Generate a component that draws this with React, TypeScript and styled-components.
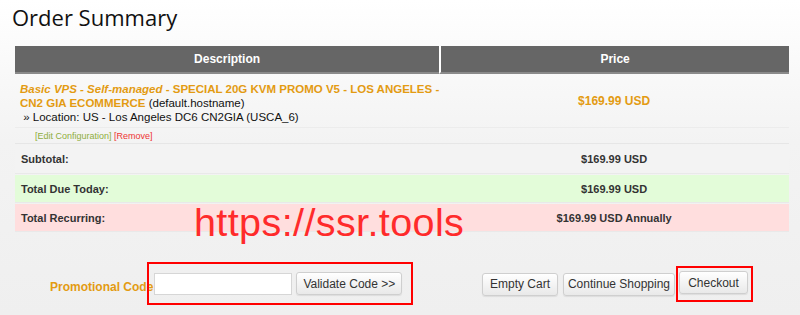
import React from "react";
import styled, { createGlobalStyle } from "styled-components";

const GlobalStyle = createGlobalStyle`
  html, body {
    margin: 0;
    padding: 0;
  }
  body {
    width: 800px;
    height: 315px;
    overflow: hidden;
    background: linear-gradient(#ffffff 0%, #f3f3f3 45%, #efefef 100%);
    font-family: "Liberation Sans", Arial, sans-serif;
  }
`;

const Page = styled.div`
  position: relative;
  width: 800px;
  height: 315px;
  box-sizing: border-box;
  padding: 0 11px 0 15px;
`;

const Title = styled.h1`
  margin: 0 0 0 -3px;
  padding-top: 3px;
  height: 46px;
  box-sizing: border-box;
  font-family: "Open Sans", sans-serif;
  font-weight: 400;
  font-size: 22px;
  line-height: 28px;
  color: #111;
`;

const Table = styled.table`
  width: 774px;
  border-collapse: separate;
  border-spacing: 0 1px;
  margin-top: -1px;
  font-size: 11px;
  color: #333;
`;

const Head = styled.th<{ $w: number }>`
  width: ${(p) => p.$w}px;
  height: 26px;
  padding: 0;
  background: #666;
  border-bottom: 2px solid #8a8a8a;
  border-left: ${(p) => (p.$w < 400 ? "2px solid #fff" : "none")};
  color: #fff;
  font-size: 12px;
  font-weight: bold;
  text-align: center;
`;

const Cell = styled.td<{ $bg?: string; $center?: boolean; $h?: number }>`
  height: ${(p) => p.$h ?? 28}px;
  padding: 0 6px;
  box-sizing: border-box;
  background: ${(p) => p.$bg ?? "transparent"};
  text-align: ${(p) => (p.$center ? "center" : "left")};
  font-weight: bold;
  vertical-align: middle;
  border-bottom: 1px solid #e9e9e9;
`;

const ItemCell = styled.td`
  padding: 7px 0 3px 5px;
  vertical-align: top;
  font-size: 11.5px;
  line-height: 14px;
  white-space: nowrap;
  color: #111;
  border-bottom: 1px solid #ececec;
`;

const PriceCell = styled.td`
  text-align: center;
  vertical-align: middle;
  font-size: 12px;
  font-weight: bold;
  color: #e39b12;
  border-bottom: 1px solid #ececec;
`;

const Product = styled.span`
  color: #e39b12;
  font-weight: bold;
`;

const Group = styled.em`
  font-style: italic;
`;

const Links = styled.td`
  height: 14px;
  padding: 0 0 0 20px;
  font-size: 9px;
  line-height: 14px;
  border-bottom: 1px solid #e6e6e6;
`;

const LinkText = styled.a<{ $c: string }>`
  color: ${(p) => p.$c};
  text-decoration: none;
`;

const Footer = styled.div`
  display: flex;
  align-items: center;
  justify-content: space-between;
  margin-top: 29px;
  width: 738px;
`;

const Promo = styled.div`
  display: flex;
  align-items: center;
  padding-left: 35px;
`;

const PromoLabel = styled.span`
  color: #e39b12;
  font-weight: bold;
  font-size: 12px;
  margin-top: 6px;
`;

const Mark = styled.div<{ $pad: string; $ml?: number }>`
  display: flex;
  align-items: center;
  gap: 4px;
  border: 2px solid #ff0000;
  padding: ${(p) => p.$pad};
  margin-left: ${(p) => p.$ml ?? 0}px;
`;

const Input = styled.input`
  width: 138px;
  height: 22px;
  box-sizing: border-box;
  border: 1px solid #d6d6d6;
  background: #fff;
  margin: 0;
`;

const Button = styled.button<{ $w: number }>`
  width: ${(p) => p.$w}px;
  height: 23px;
  margin: 0;
  padding: 0;
  border: 1px solid #cfcfcf;
  border-radius: 3px;
  background: linear-gradient(#ffffff, #e9e9e9);
  box-shadow: 0 1px 1px rgba(0, 0, 0, 0.08);
  font-family: "Liberation Sans", Arial, sans-serif;
  font-size: 12px;
  color: #333;
  white-space: nowrap;
`;

const Actions = styled.div`
  display: flex;
  align-items: center;
  gap: 5px;
  margin-top: 1px;
`;

const Watermark = styled.div`
  position: absolute;
  left: 194px;
  top: 200px;
  font-size: 39.5px;
  line-height: 44px;
  color: #ff2b2b;
  letter-spacing: 0.4px;
`;

export default function App() {
  return (
    <>
      <GlobalStyle />
      <Page>
        <Title>Order Summary</Title>
        <Table>
          <thead>
            <tr>
              <Head $w={424}>Description</Head>
              <Head $w={348}>Price</Head>
            </tr>
          </thead>
          <tbody>
            <tr>
              <ItemCell>
                <Product>
                  <Group>Basic VPS - Self-managed</Group> - SPECIAL 20G KVM PROMO V5 - LOS ANGELES -
                  <br />
                  CN2 GIA ECOMMERCE
                </Product>{" "}
                (default.hostname)
                <br />
                &nbsp;» Location: US - Los Angeles DC6 CN2GIA (USCA_6)
              </ItemCell>
              <PriceCell>$169.99 USD</PriceCell>
            </tr>
            <tr>
              <Links colSpan={2}>
                <LinkText $c="#8fae3c">[Edit Configuration]</LinkText>{" "}
                <LinkText $c="#ee3333">[Remove]</LinkText>
              </Links>
            </tr>
            <tr>
              <Cell $bg="#f3f3f3" $h={29}>Subtotal:</Cell>
              <Cell $bg="#f3f3f3" $h={29} $center>
                $169.99 USD
              </Cell>
            </tr>
            <tr>
              <Cell $bg="#e3fcd9">Total Due Today:</Cell>
              <Cell $bg="#e3fcd9" $center>
                $169.99 USD
              </Cell>
            </tr>
            <tr>
              <Cell $bg="#ffdede">Total Recurring:</Cell>
              <Cell $bg="#ffdede" $center>
                $169.99 USD Annually
              </Cell>
            </tr>
          </tbody>
        </Table>
        <Footer>
          <Promo>
            <PromoLabel>Promotional Code</PromoLabel>
            <Mark $pad="8px 9px 8px 5px" $ml={-6}>
              <Input type="text" />
              <Button $w={106}>Validate Code &gt;&gt;</Button>
            </Mark>
          </Promo>
          <Actions>
            <Button $w={76}>Empty Cart</Button>
            <Button $w={112}>Continue Shopping</Button>
            <Mark $pad="3px 3px 6px 1px" $ml={-4}>
              <Button $w={69}>Checkout</Button>
            </Mark>
          </Actions>
        </Footer>
        <Watermark>https://ssr.tools</Watermark>
      </Page>
    </>
  );
}
